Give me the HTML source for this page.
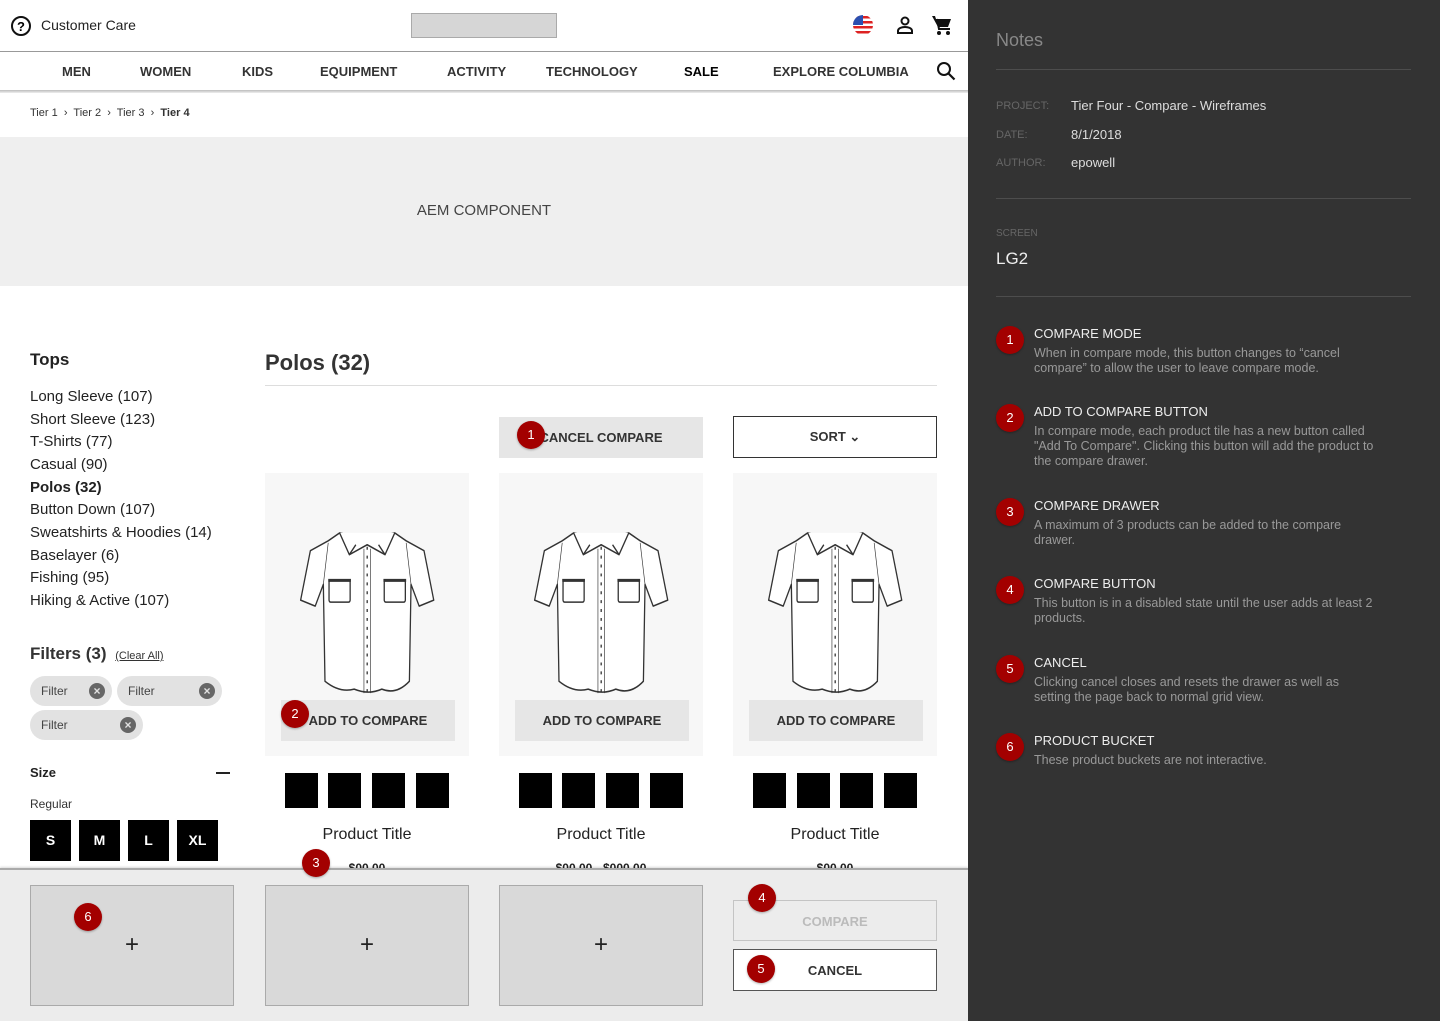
<!DOCTYPE html>
<html><head><meta charset="utf-8"><style>
*{margin:0;padding:0;box-sizing:border-box}
body{width:1440px;height:1021px;position:relative;overflow:hidden;background:#fff;font-family:"Liberation Sans",sans-serif;color:#222}
.a{position:absolute;white-space:nowrap}
.nav{font-size:13px;font-weight:bold;color:#333;top:64px}
.b{position:absolute;width:28px;height:28px;border-radius:50%;background:#a30000;color:#fff;font-size:13px;text-align:center;line-height:28px;box-shadow:0 1px 2px rgba(0,0,0,.3)}
.li{font-size:15px;left:30px;color:#222}
.tile{position:absolute;top:473px;width:204px;height:283px;background:#f7f7f7}
.atc{position:absolute;left:16px;top:227px;width:174px;height:41px;background:#e6e6e6;font-size:13px;font-weight:bold;color:#333;text-align:center;line-height:41px}
.sw{position:absolute;top:773px;width:33px;height:35px;background:#000}
.pt{position:absolute;top:826px;width:204px;text-align:center;font-size:16px;color:#222}
.box{position:absolute;top:885px;width:204px;height:121px;background:#d9d9d9;border:1px solid #aaa;text-align:center;line-height:118px;font-size:24px;color:#222}
.chip{position:absolute;height:30px;border-radius:15px;background:#e2e2e2;font-size:12px;color:#444;line-height:30px;padding-left:11px}
.x{position:absolute;right:7px;top:7px;width:16px;height:16px;border-radius:50%;background:#666;color:#e2e2e2;font-size:12px;line-height:16px;text-align:center;font-weight:bold}
.sz{position:absolute;top:820px;width:41px;height:41px;background:#000;color:#fff;font-weight:bold;font-size:14px;text-align:center;line-height:41px}
.notes{position:absolute;left:968px;top:0;width:472px;height:1021px;background:#333}
.lab{font-size:11px;color:#666}
.val{font-size:13px;color:#ddd;left:103px}
.nt{position:absolute;left:66px;font-size:13px;color:#eee;width:340px;white-space:nowrap}
.nt p{font-size:12.5px;color:#999;margin-top:5px;line-height:15px;white-space:normal}
.hr{position:absolute;left:28px;width:415px;height:1px;background:#4d4d4d}
</style></head><body>
<svg class="a" style="left:10px;top:15px" width="22" height="22" viewBox="0 0 22 22"><circle cx="11" cy="11" r="9" fill="none" stroke="#111" stroke-width="2"/><text x="11" y="16" text-anchor="middle" font-size="13" font-weight="bold" font-family="Liberation Sans">?</text></svg>
<div class="a" style="left:41px;top:17px;font-size:14px;color:#222">Customer Care</div>
<div class="a" style="left:411px;top:13px;width:146px;height:25px;background:#d6d6d6;border:1px solid #aaa"></div>
<svg class="a" style="left:852px;top:14px" width="22" height="22" viewBox="0 0 22 22"><defs><clipPath id="c"><circle cx="11" cy="11" r="10"/></clipPath></defs><g clip-path="url(#c)"><rect width="22" height="22" fill="#fff"/><rect y="2" width="22" height="2.5" fill="#d22"/><rect y="7" width="22" height="2.5" fill="#d22"/><rect y="12" width="22" height="2.5" fill="#d22"/><rect y="17" width="22" height="2.5" fill="#d22"/><rect width="11" height="11" fill="#2a4fb0"/></g></svg>
<svg class="a" style="left:895px;top:15px" width="20" height="20" viewBox="0 0 20 20"><circle cx="10" cy="6" r="3.5" fill="none" stroke="#111" stroke-width="2"/><path d="M3 18v-2c0-3 4-4 7-4s7 1 7 4v2z" fill="none" stroke="#111" stroke-width="2"/></svg>
<svg class="a" style="left:931px;top:14px" width="22" height="22" viewBox="0 0 22 22"><path d="M1 2h3l1 3h15l-3 8H7z" fill="#111"/><path d="M6 5l2 10h11" fill="none" stroke="#111" stroke-width="2"/><circle cx="8" cy="19" r="2" fill="#111"/><circle cx="17" cy="19" r="2" fill="#111"/></svg>
<div class="a" style="left:0;top:51px;width:968px;height:1px;background:#999"></div>
<div class="a nav" style="left:62px">MEN</div>
<div class="a nav" style="left:140px">WOMEN</div>
<div class="a nav" style="left:242px">KIDS</div>
<div class="a nav" style="left:320px">EQUIPMENT</div>
<div class="a nav" style="left:447px">ACTIVITY</div>
<div class="a nav" style="left:546px">TECHNOLOGY</div>
<div class="a nav" style="left:684px;color:#000">SALE</div>
<div class="a nav" style="left:773px">EXPLORE COLUMBIA</div>
<svg class="a" style="left:936px;top:61px" width="20" height="20" viewBox="0 0 20 20"><circle cx="8" cy="8" r="6" fill="none" stroke="#111" stroke-width="2"/><path d="M12.5 12.5l6 6" stroke="#111" stroke-width="2.2"/></svg>
<div class="a" style="left:0;top:90px;width:968px;height:3px;background:linear-gradient(#bbb,#eee)"></div>
<div class="a" style="left:30px;top:107px;font-size:11px;color:#333">Tier 1 &nbsp;›&nbsp; Tier 2 &nbsp;›&nbsp; Tier 3 &nbsp;›&nbsp; <b>Tier 4</b></div>
<div class="a" style="left:0;top:137px;width:968px;height:149px;background:#efefef"></div>
<div class="a" style="left:0;top:202px;width:968px;text-align:center;font-size:15px;color:#444">AEM COMPONENT</div>
<div class="a" style="left:30px;top:350px;font-size:17px;font-weight:bold">Tops</div>
<div class="a li" style="top:388px">Long Sleeve (107)</div>
<div class="a li" style="top:411px">Short Sleeve (123)</div>
<div class="a li" style="top:433px">T-Shirts (77)</div>
<div class="a li" style="top:456px">Casual (90)</div>
<div class="a li" style="top:479px;font-weight:bold">Polos (32)</div>
<div class="a li" style="top:501px">Button Down (107)</div>
<div class="a li" style="top:524px">Sweatshirts &amp; Hoodies (14)</div>
<div class="a li" style="top:547px">Baselayer (6)</div>
<div class="a li" style="top:569px">Fishing (95)</div>
<div class="a li" style="top:592px">Hiking &amp; Active (107)</div>
<div class="a" style="left:30px;top:644px;font-size:17px;font-weight:bold;color:#333">Filters (3) <span style="font-size:11px;font-weight:normal;text-decoration:underline;margin-left:4px">(Clear All)</span></div>
<div class="chip" style="left:30px;top:676px;width:82px">Filter<span class="x">×</span></div>
<div class="chip" style="left:117px;top:676px;width:105px">Filter<span class="x">×</span></div>
<div class="chip" style="left:30px;top:710px;width:113px">Filter<span class="x">×</span></div>
<div class="a" style="left:30px;top:765px;font-size:13px;font-weight:bold">Size</div>
<div class="a" style="left:216px;top:772px;width:14px;height:2px;background:#222"></div>
<div class="a" style="left:30px;top:797px;font-size:12px;color:#333">Regular</div>
<div class="sz" style="left:30px">S</div><div class="sz" style="left:79px">M</div><div class="sz" style="left:128px">L</div><div class="sz" style="left:177px">XL</div>
<div class="a" style="left:265px;top:350px;font-size:22px;font-weight:bold;color:#333">Polos (32)</div>
<div class="a" style="left:265px;top:385px;width:672px;height:1px;background:#ddd"></div>
<div class="a" style="left:499px;top:417px;width:204px;height:41px;background:#e6e6e6;text-align:center;line-height:41px;font-size:13px;font-weight:bold;color:#333">CANCEL COMPARE</div>
<div class="b" style="left:517px;top:421px">1</div>
<div class="a" style="left:733px;top:416px;width:204px;height:42px;border:1px solid #333;text-align:center;line-height:40px;font-size:13px;font-weight:bold;color:#333">SORT &#8964;</div>
<svg width="0" height="0" style="position:absolute"><defs><g id="shirt" fill="#fff" stroke="#333" stroke-width="1.6" stroke-linejoin="round"><path d="M50 8 L36 16 L14 26 L2 76 L20 82 L30 60 L32 158 Q50 170 68 166 Q86 172 102 166 Q120 172 136 158 L138 60 L148 82 L166 76 L154 26 L132 16 L118 8 Q84 16 50 8Z"/><path d="M50 8 L62 30 L84 20 L106 30 L118 8" /><path d="M62 30 L70 20 M106 30 L98 20"/><path d="M84 22 L84 170" stroke-dasharray="3 6"/><path d="M80 24 L80 170 M88 24 L88 170" stroke-width=".8"/><rect x="37" y="56" width="26" height="22" rx="2"/><rect x="105" y="56" width="26" height="22" rx="2"/><path d="M36 56h28M104 56h28" stroke-width="3"/><path d="M30 60L36 18M138 60L132 18" stroke-width=".8"/></g></defs></svg>
<div class="tile" style="left:265px"><svg style="position:absolute;left:34px;top:52px" width="138" height="178" viewBox="0 0 170 180" preserveAspectRatio="none"><use href="#shirt"/></svg><div class="atc">ADD TO COMPARE</div></div>
<div class="b" style="left:281px;top:700px">2</div>
<div class="tile" style="left:499px"><svg style="position:absolute;left:34px;top:52px" width="138" height="178" viewBox="0 0 170 180" preserveAspectRatio="none"><use href="#shirt"/></svg><div class="atc">ADD TO COMPARE</div></div>
<div class="tile" style="left:733px"><svg style="position:absolute;left:34px;top:52px" width="138" height="178" viewBox="0 0 170 180" preserveAspectRatio="none"><use href="#shirt"/></svg><div class="atc">ADD TO COMPARE</div></div>
<div class="sw" style="left:285px"></div><div class="sw" style="left:328px"></div><div class="sw" style="left:372px"></div><div class="sw" style="left:416px"></div>
<div class="sw" style="left:519px"></div><div class="sw" style="left:562px"></div><div class="sw" style="left:606px"></div><div class="sw" style="left:650px"></div>
<div class="sw" style="left:753px"></div><div class="sw" style="left:797px"></div><div class="sw" style="left:840px"></div><div class="sw" style="left:884px"></div>
<div class="pt" style="left:265px">Product Title</div>
<div class="pt" style="left:499px">Product Title</div>
<div class="pt" style="left:733px">Product Title</div>
<div class="a" style="left:265px;top:861px;width:204px;text-align:center;font-size:12px;font-weight:bold">$00.00</div>
<div class="a" style="left:499px;top:861px;width:204px;text-align:center;font-size:12px;font-weight:bold">$00.00 - $000.00</div>
<div class="a" style="left:733px;top:861px;width:204px;text-align:center;font-size:12px;font-weight:bold">$00.00</div>
<div class="a" style="left:0;top:868px;width:968px;height:153px;background:#ececec;border-top:2px solid #aaa;box-shadow:0 -1px 2px rgba(0,0,0,.15)"></div>
<div class="b" style="left:302px;top:849px">3</div>
<div class="box" style="left:30px">+</div>
<div class="box" style="left:265px">+</div>
<div class="box" style="left:499px">+</div>
<div class="b" style="left:74px;top:903px">6</div>
<div class="a" style="left:733px;top:900px;width:204px;height:41px;border:1px solid #c4c4c4;text-align:center;line-height:41px;font-size:13px;font-weight:bold;color:#bbb">COMPARE</div>
<div class="b" style="left:748px;top:884px">4</div>
<div class="a" style="left:733px;top:949px;width:204px;height:42px;border:1px solid #555;background:#fff;text-align:center;line-height:41px;font-size:13px;font-weight:bold;color:#333">CANCEL</div>
<div class="b" style="left:747px;top:955px">5</div>
<div class="notes">
<div class="a" style="left:28px;top:30px;font-size:18px;color:#888">Notes</div>
<div class="hr" style="top:69px"></div>
<div class="a lab" style="left:28px;top:100px">PROJECT:</div><div class="a val" style="top:98px">Tier Four - Compare - Wireframes</div>
<div class="a lab" style="left:28px;top:129px">DATE:</div><div class="a val" style="top:127px">8/1/2018</div>
<div class="a lab" style="left:28px;top:157px">AUTHOR:</div><div class="a val" style="top:155px">epowell</div>
<div class="hr" style="top:198px"></div>
<div class="a lab" style="left:28px;top:228px;font-size:10px">SCREEN</div>
<div class="a" style="left:28px;top:249px;font-size:17px;color:#eee">LG2</div>
<div class="hr" style="top:296px"></div>
<div class="b" style="left:28px;top:326px">1</div><div class="nt" style="top:326px">COMPARE MODE<p>When in compare mode, this button changes to  “cancel compare” to allow the user to leave compare mode.</p></div>
<div class="b" style="left:28px;top:404px">2</div><div class="nt" style="top:404px">ADD TO COMPARE BUTTON<p>In compare mode, each product tile has a new button called "Add To Compare". Clicking this button will add the product to the compare drawer.</p></div>
<div class="b" style="left:28px;top:498px">3</div><div class="nt" style="top:498px">COMPARE DRAWER<p>A maximum of 3 products can be added to the compare drawer.</p></div>
<div class="b" style="left:28px;top:576px">4</div><div class="nt" style="top:576px">COMPARE BUTTON<p>This button is in a disabled state until the user adds at least 2 products.</p></div>
<div class="b" style="left:28px;top:655px">5</div><div class="nt" style="top:655px">CANCEL<p>Clicking cancel closes and resets the drawer as well as setting the page back to normal grid view.</p></div>
<div class="b" style="left:28px;top:733px">6</div><div class="nt" style="top:733px">PRODUCT BUCKET<p>These product buckets are not interactive.</p></div>
</div>
</body></html>
